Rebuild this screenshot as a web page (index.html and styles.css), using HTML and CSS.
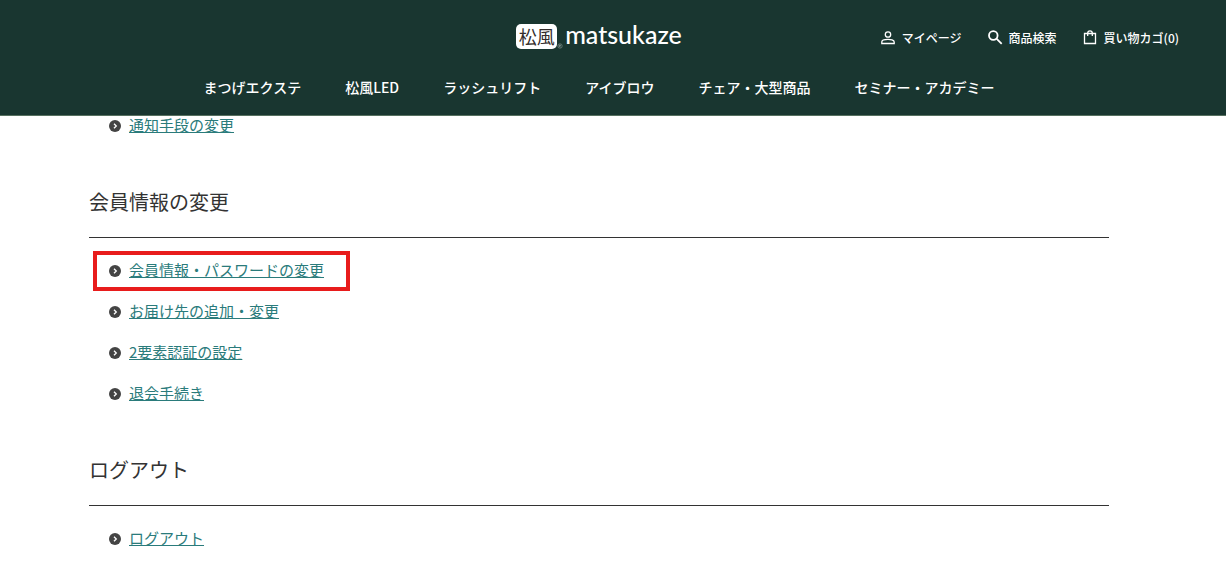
FILE: index.html
```html
<!DOCTYPE html>
<html lang="ja">
  <head>
    <meta charset="UTF-8" />
    <meta name="viewport" content="width=device-width, initial-scale=1.0" />
    <title>マイページ | matsukaze</title>
    <link rel="stylesheet" href="styles.css">
  </head>
  <body>
    <!-- Round arrow used by the link lists -->
    <svg class="symbols" width="0" height="0" aria-hidden="true">
      <symbol id="arrow" viewBox="0 0 12 12">
        <circle cx="6" cy="6" r="6" fill="#444" />
        <path d="M5 3.700L7.300 6 5 8.300" fill="none" stroke="#fff" stroke-width="1.3" />
      </symbol>
    </svg>

    <!-- Header -->
    <header class="site-header">
      <div class="header-top">
        <a class="logo" href="#">
          <span class="logo-mark">松風</span>
          <svg class="logo-reg" viewBox="0 0 6 6" aria-hidden="true">
            <circle cx="3" cy="3" r="2.2" />
            <path d="M2.300 4.200V2h1.200v1H2.300l1.400 1.200" />
          </svg>
          <span class="logo-name">matsukaze</span>
        </a>
        <ul class="tools">
          <li>
            <a href="#">
              <svg class="icon" viewBox="0 0 16 16" aria-hidden="true">
                <circle cx="8" cy="4.500" r="2.700" />
                <path d="M1.800 13.500v-1.600C1.800 10.100 5.500 9.300 8 9.300s6.200.8 6.200 2.600v1.600z" />
              </svg>
              マイページ
            </a>
          </li>
          <li>
            <a href="#">
              <svg class="icon icon-search" viewBox="0 0 16 16" aria-hidden="true">
                <circle cx="6.300" cy="5.500" r="4.300" />
                <path d="M9.500 8.700l5.200 5.200" />
              </svg>
              商品検索
            </a>
          </li>
          <li>
            <a href="#">
              <svg class="icon" viewBox="0 0 16 16" aria-hidden="true">
                <path d="M2.500 3.500h11v10h-11z" />
                <path d="M5.700 6V3.200a2.300 2.300 0 0 1 4.600 0V6" />
              </svg>
              買い物カゴ(0)
            </a>
          </li>
        </ul>
      </div>
      <nav>
        <ul class="nav-list">
          <li><a href="#">まつげエクステ</a></li>
          <li><a href="#">松風LED</a></li>
          <li><a href="#">ラッシュリフト</a></li>
          <li><a href="#">アイブロウ</a></li>
          <li><a href="#">チェア・大型商品</a></li>
          <li><a href="#">セミナー・アカデミー</a></li>
        </ul>
      </nav>
    </header>

    <!-- My page menu -->
    <main class="mypage">
      <ul class="link-list">
        <li><svg class="marker"><use href="#arrow" /></svg><a href="#">通知手段の変更</a></li>
      </ul>

      <section>
        <h2>会員情報の変更</h2>
        <ul class="link-list">
          <li class="highlight"><svg class="marker"><use href="#arrow" /></svg><a href="#">会員情報・パスワードの変更</a></li>
          <li><svg class="marker"><use href="#arrow" /></svg><a href="#">お届け先の追加・変更</a></li>
          <li><svg class="marker"><use href="#arrow" /></svg><a href="#">2要素認証の設定</a></li>
          <li><svg class="marker"><use href="#arrow" /></svg><a href="#">退会手続き</a></li>
        </ul>
      </section>

      <section>
        <h2>ログアウト</h2>
        <ul class="link-list">
          <li><svg class="marker"><use href="#arrow" /></svg><a href="#">ログアウト</a></li>
        </ul>
      </section>
    </main>
  </body>
</html>
```
FILE: styles.css
```css
*,
*::after {
  box-sizing: border-box;
}

body {
  margin: 0;
  padding-right: 28px;
  background-color: #fff;
  color: #333;
  font-family: "Noto Sans CJK JP", sans-serif;
}

ul {
  list-style: none;
  margin: 0;
  padding: 0;
}

.symbols {
  display: none;
}

/* Header */
.site-header {
  position: fixed;
  top: 0;
  left: 0;
  right: 0;
  z-index: 10;
  padding-right: 28px;
  background-color: #193630;
  border-bottom: 1px solid #56705f;
}

.site-header a {
  color: #fff;
  text-decoration: none;
}

.header-top {
  display: grid;
  grid-template-columns: 1fr auto 1fr;
  align-items: center;
  height: 73px;
  padding: 0 19px;
}

.logo {
  grid-column: 2;
  display: flex;
}

.logo .logo-mark {
  width: 41px;
  height: 25px;
  border-radius: 5px;
  background-color: #fff;
  color: #332c2b;
  font-size: 18px;
  line-height: 24px;
  text-align: center;
}

.logo-reg {
  align-self: flex-end;
  width: 6px;
  height: 6px;
  margin-right: 2px;
  fill: none;
  stroke: #9fada9;
  stroke-width: 0.5;
}

.logo-name {
  font-family: Lato, sans-serif;
  font-size: 25px;
  font-weight: 500;
  line-height: 20px;
}

.tools {
  display: flex;
  justify-content: flex-end;
  gap: 25px;
  padding-top: 3px;
  font-size: 12px;
  font-weight: 500;
}

.tools a {
  display: flex;
  align-items: center;
  gap: 6px;
  line-height: 16px;
  white-space: nowrap;
}

.icon {
  width: 16px;
  height: 16px;
  fill: none;
  stroke: #fff;
  stroke-width: 1.3;
}

.icon-search {
  stroke-width: 1.8;
}

.nav-list {
  display: flex;
  justify-content: center;
  gap: 44px;
  padding: 2px 0 16px;
  font-size: 14px;
  font-weight: 500;
  line-height: 24px;
}

/* My page menu */
.mypage {
  max-width: 1020px;
  margin: 0 auto;
  padding: 105px 0 24px;
}

.mypage h2 {
  margin: 41px 0 12px;
  padding-bottom: 20px;
  border-bottom: 1px solid #333;
  font-size: 20px;
  font-weight: 400;
  line-height: 30px;
}

.link-list li {
  display: flex;
  align-items: center;
  gap: 8px;
  height: 41px;
  padding-left: 20px;
  font-size: 15px;
}

.marker {
  width: 12px;
  height: 12px;
}

.link-list a {
  padding-bottom: 2px;
  color: #2a7b7b;
  text-decoration: underline;
}

.highlight {
  position: relative;
}

.highlight::after {
  content: "";
  position: absolute;
  top: 1px;
  left: 4px;
  width: 257px;
  height: 40px;
  border: 4px solid #e81c1c;
  pointer-events: none;
}
```
